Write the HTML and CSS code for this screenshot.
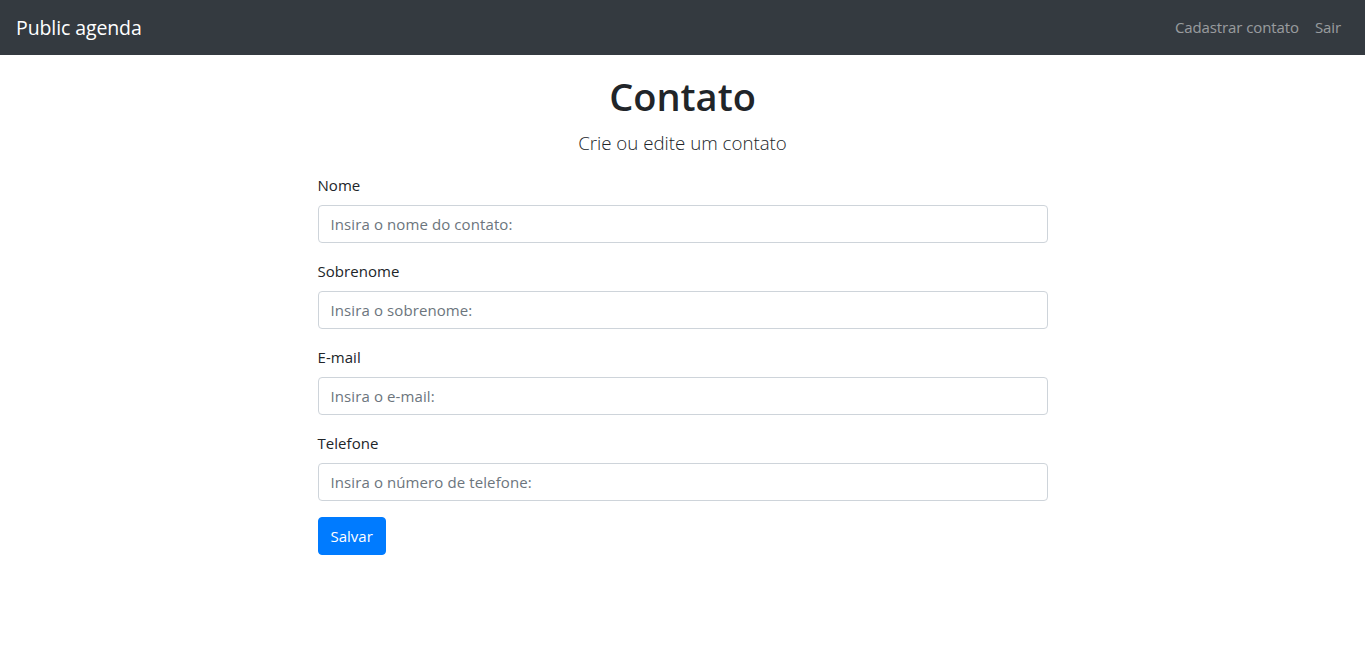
FILE: index.html
```html
<!DOCTYPE html>
<html lang="pt-br">
<head>
<meta charset="utf-8">
<title>Public agenda</title>
<link rel="stylesheet" href="styles.css">
</head>
<body>
<nav class="navbar">
  <a class="brand" href="#">Public agenda</a>
  <ul class="nav">
    <li><a class="nav-link" href="#">Cadastrar contato</a></li>
    <li><a class="nav-link" href="#">Sair</a></li>
  </ul>
</nav>
<main class="container">
  <div class="col">
    <h1 class="title">Contato</h1>
    <p class="lead">Crie ou edite um contato</p>
    <form class="form">
      <div class="form-group">
        <label for="nome">Nome</label>
        <input id="nome" class="form-control" type="text" placeholder="Insira o nome do contato:">
      </div>
      <div class="form-group">
        <label for="sobrenome">Sobrenome</label>
        <input id="sobrenome" class="form-control" type="text" placeholder="Insira o sobrenome:">
      </div>
      <div class="form-group">
        <label for="email">E-mail</label>
        <input id="email" class="form-control" type="email" placeholder="Insira o e-mail:">
      </div>
      <div class="form-group">
        <label for="tel">Telefone</label>
        <input id="tel" class="form-control" type="text" placeholder="Insira o número de telefone:">
      </div>
      <button type="button" class="btn">Salvar</button>
    </form>
  </div>
</main>
</body>
</html>
```
FILE: styles.css
```css
* { box-sizing: border-box; }
html, body { margin: 0; padding: 0; }
body {
  font-family: "Open Sans", "Noto Sans", sans-serif;
  font-size: 16px;
  line-height: 1.5;
  color: #212529;
  background: #fff;
}
a { text-decoration: none; }
.navbar {
  background: #343a40;
  display: flex;
  align-items: center;
  justify-content: space-between;
  padding: 8px 16px;
  height: 55px;
}
.brand {
  color: #fff;
  font-size: 19.5px;
  line-height: 30px;
  letter-spacing: -0.1px;
}
.nav {
  list-style: none;
  margin: 0;
  padding: 0;
  display: flex;
}
.nav-link {
  display: block;
  padding: 8px 8px;
  color: rgba(255,255,255,.5);
  font-size: 15px;
  letter-spacing: -0.1px;
}
.container {
  width: 730px;
  margin: 0 auto;
  padding-top: 17px;
}
.title {
  margin: 0 0 8px;
  text-align: center;
  font-size: 38px;
  font-weight: 600;
  line-height: 48px;
}
.lead {
  margin: 0 0 15px;
  text-align: center;
  font-size: 18.7px;
  font-weight: 300;
  line-height: 30px;
}
.form-group { margin-bottom: 16px; }
label {
  display: block;
  margin-bottom: 8px;
  font-size: 15px;
  line-height: 24px;
  letter-spacing: 0.05px;
}
.form-control {
  display: block;
  width: 100%;
  height: 38px;
  padding: 6px 12px;
  font-family: inherit;
  font-size: 15px;
  line-height: 24px;
  letter-spacing: 0.1px;
  color: #495057;
  border: 1px solid #ced4da;
  border-radius: 4px;
  background: #fff;
}
.form-control::placeholder { color: #6c757d; opacity: 1; }
.btn {
  display: inline-block;
  height: 38px;
  padding: 6px 12px;
  font-family: inherit;
  font-size: 15px;
  line-height: 24px;
  color: #fff;
  background: #007bff;
  border: 1px solid #007bff;
  border-radius: 4px;
  cursor: pointer;
}
```
